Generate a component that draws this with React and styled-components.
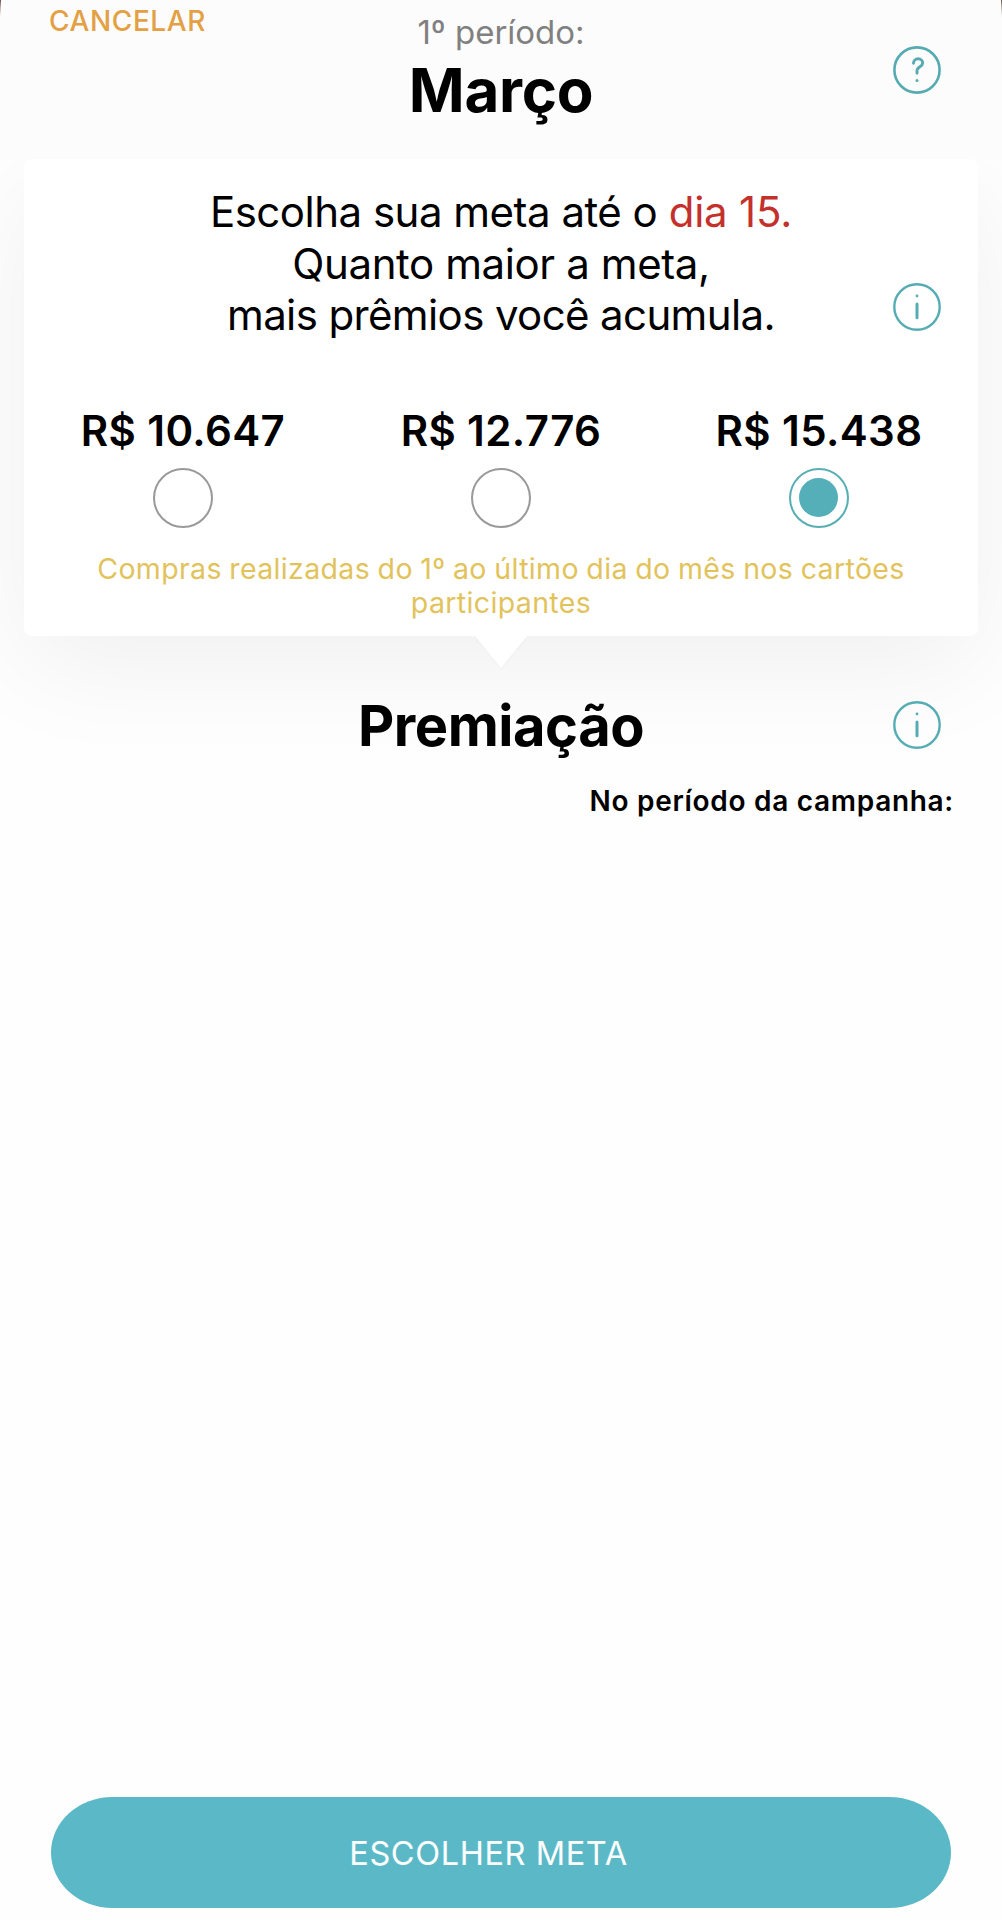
import React, { useState } from 'react'
import styled, { createGlobalStyle } from 'styled-components'

const goals = ['R$ 10.647', 'R$ 12.776', 'R$ 15.438']

function HelpIcon() {
  return (
    <svg width="48" height="48" viewBox="0 0 48 48" fill="none" stroke="#55abb1" strokeLinecap="round">
      <circle cx="24" cy="24" r="22.6" strokeWidth="2.6" />
      <path d="M20.5 17.2c0-2.6 2-4.4 4.6-4.400s4.600 1.800 4.600 4.300c0 3.900-5.700 3.600-5.700 7.700v2.400" strokeWidth="2.9" />
      <circle cx="24" cy="34.6" r="1.5" fill="#55abb1" stroke="none" />
    </svg>
  )
}

function InfoIcon() {
  return (
    <svg width="48" height="48" viewBox="0 0 48 48" fill="none" stroke="#55adb3" strokeLinecap="round">
      <circle cx="24" cy="24" r="22.7" strokeWidth="2.4" />
      <path d="M24 21v13.8" strokeWidth="3" />
      <circle cx="24" cy="13" r="1.4" fill="#55adb3" stroke="none" />
    </svg>
  )
}

function App() {
  const [selected, setSelected] = useState(2)

  return (
    <Screen>
      <GlobalStyle />
      <Header>
        <Cancel>CANCELAR</Cancel>
        <Titles>
          <Period>1º período:</Period>
          <Month>Março</Month>
        </Titles>
        <IconSlot $top={46}>
          <HelpIcon />
        </IconSlot>
      </Header>
      <Content>
        <Card>
          <Message>
            <Line $spacing="-0.5px">
              Escolha sua meta até o <Deadline>dia 15.</Deadline>
            </Line>
            <Line $spacing="-0.4px">Quanto maior a meta,</Line>
            <Line $spacing="-0.62px">mais prêmios você acumula.</Line>
            <CardInfo>
              <InfoIcon />
            </CardInfo>
          </Message>
          <Goals>
            {goals.map((goal, i) => (
              <Goal key={goal} onClick={() => setSelected(i)}>
                <Amount>{goal}</Amount>
                <Radio $active={i === selected}>{i === selected && <Dot />}</Radio>
              </Goal>
            ))}
          </Goals>
          <Note>Compras realizadas do 1º ao último dia do mês nos cartões participantes</Note>
          <Arrow />
        </Card>
        <Awards>
          <AwardsTitle>Premiação</AwardsTitle>
          <IconSlot $top={26}>
            <InfoIcon />
          </IconSlot>
        </Awards>
        <Campaign>No período da campanha:</Campaign>
      </Content>
      <Footer>
        <ChooseButton>ESCOLHER META</ChooseButton>
      </Footer>
    </Screen>
  )
}

export default App

const GlobalStyle = createGlobalStyle`
    * {
        box-sizing: border-box;
    }
    body {
        margin: 0;
        background: #fefefe;
    }
`

const Screen = styled.div`
    display: flex;
    flex-direction: column;
    height: 1920px;
    overflow: hidden;
    background: #fefefe;
    color: #000;
    font-family: Inter, "Liberation Sans", sans-serif;
`

const Header = styled.header`
    display: grid;
    grid-template-columns: 1fr auto 1fr;
    height: 159px;
    background: #fcfcfc;
    position: relative;
    z-index: 1;
    /* what is left of the page behind the rounded sheet */
    &::before, &::after {
        content: "";
        position: absolute;
        top: 0;
        left: 0;
        width: 1px;
        height: 17px;
        background: linear-gradient(#6b4a42, #b9aaa6);
        clip-path: polygon(0 0, 100% 0, 0 100%);
    }
    &::after {
        left: auto;
        right: 0;
        transform: scaleX(-1);
    }
`

const Cancel = styled.div`
    padding: 4px 0 0 49px;
    font-size: 28px;
    line-height: 34px;
    font-weight: 500;
    letter-spacing: 0.6px;
    color: #e3a044;
`

const Titles = styled.div`
    text-align: center;
`

const Period = styled.div`
    padding-top: 12px;
    font-size: 33px;
    line-height: 41px;
    color: #808080;
`

const Month = styled.h1`
    margin: -1px 0 0;
    font-size: 60px;
    line-height: 76px;
    font-weight: 700;
    letter-spacing: -0.3px;
`

const IconSlot = styled.div`
    display: flex;
    justify-content: flex-end;
    align-items: flex-start;
    padding: ${props => props.$top}px 61px 0 0;
`

const Content = styled.main`
    flex: 1;
`

const Card = styled.section`
    position: relative;
    height: 477px;
    margin: 0 24px;
    padding-top: 27px;
    border-radius: 8px;
    background: #fff;
    box-shadow: 0 30px 110px rgba(0, 0, 0, 0.06);
`

const Message = styled.div`
    position: relative;
    text-align: center;
`

const Line = styled.div`
    font-size: 42px;
    line-height: 51.5px;
    letter-spacing: ${props => props.$spacing};
    white-space: nowrap;
`

const Deadline = styled.span`
    letter-spacing: -0.2px;
    color: #c4302b;
`

const CardInfo = styled.div`
    position: absolute;
    right: 37px;
    top: 97px;
    display: flex;
`

const Goals = styled.div`
    display: grid;
    grid-template-columns: repeat(3, 1fr);
    margin-top: 64px;
`

const Goal = styled.div`
    display: flex;
    flex-direction: column;
    align-items: center;
    cursor: pointer;
`

const Amount = styled.div`
    font-size: 42px;
    line-height: 52px;
    font-weight: 600;
    letter-spacing: 0.4px;
    white-space: nowrap;
`

const Radio = styled.div`
    display: flex;
    justify-content: center;
    align-items: center;
    width: 60px;
    height: 60px;
    margin-top: 11px;
    border: 2px solid ${props => (props.$active ? '#57aeb3' : '#999')};
    border-radius: 50%;
`

const Dot = styled.div`
    width: 39px;
    height: 39px;
    margin: 0 1px 1px 0;
    border-radius: 50%;
    background: #55afb9;
`

const Note = styled.p`
    margin: 24px 60px 0;
    font-size: 28.5px;
    line-height: 34px;
    letter-spacing: 0.36px;
    word-spacing: -0.9px;
    text-align: center;
    color: #e2c35b;
`

const Arrow = styled.div`
    position: absolute;
    left: 50%;
    top: 100%;
    transform: translateX(-50%);
    border: solid transparent;
    border-width: 32px 26px 0;
    border-top-color: #fff;
    filter: drop-shadow(0 1px 1px rgba(0, 0, 0, 0.03));
`

const Awards = styled.div`
    display: grid;
    grid-template-columns: 1fr auto 1fr;
    position: relative;
    padding-top: 39px;
    & > :first-child {
        grid-column: 2;
    }
`

const AwardsTitle = styled.h2`
    margin: 13px 0 0;
    font-size: 56px;
    line-height: 76px;
    font-weight: 700;
    letter-spacing: -0.45px;
`

const Campaign = styled.div`
    position: relative;
    margin-top: 18px;
    padding-right: 48px;
    font-size: 28px;
    line-height: 38px;
    font-weight: 600;
    letter-spacing: 0.7px;
    text-align: right;
`

const Footer = styled.footer`
    padding: 0 51px 12px;
`

const ChooseButton = styled.button`
    display: flex;
    justify-content: center;
    align-items: center;
    width: 100%;
    height: 111px;
    padding: 1px 25px 0 0;
    border: 0;
    border-radius: 62px / 56px;
    background: #5bb9c7;
    color: #fff;
    font: 400 32.5px Inter, "Liberation Sans", sans-serif;
    letter-spacing: 0.6px;
`
